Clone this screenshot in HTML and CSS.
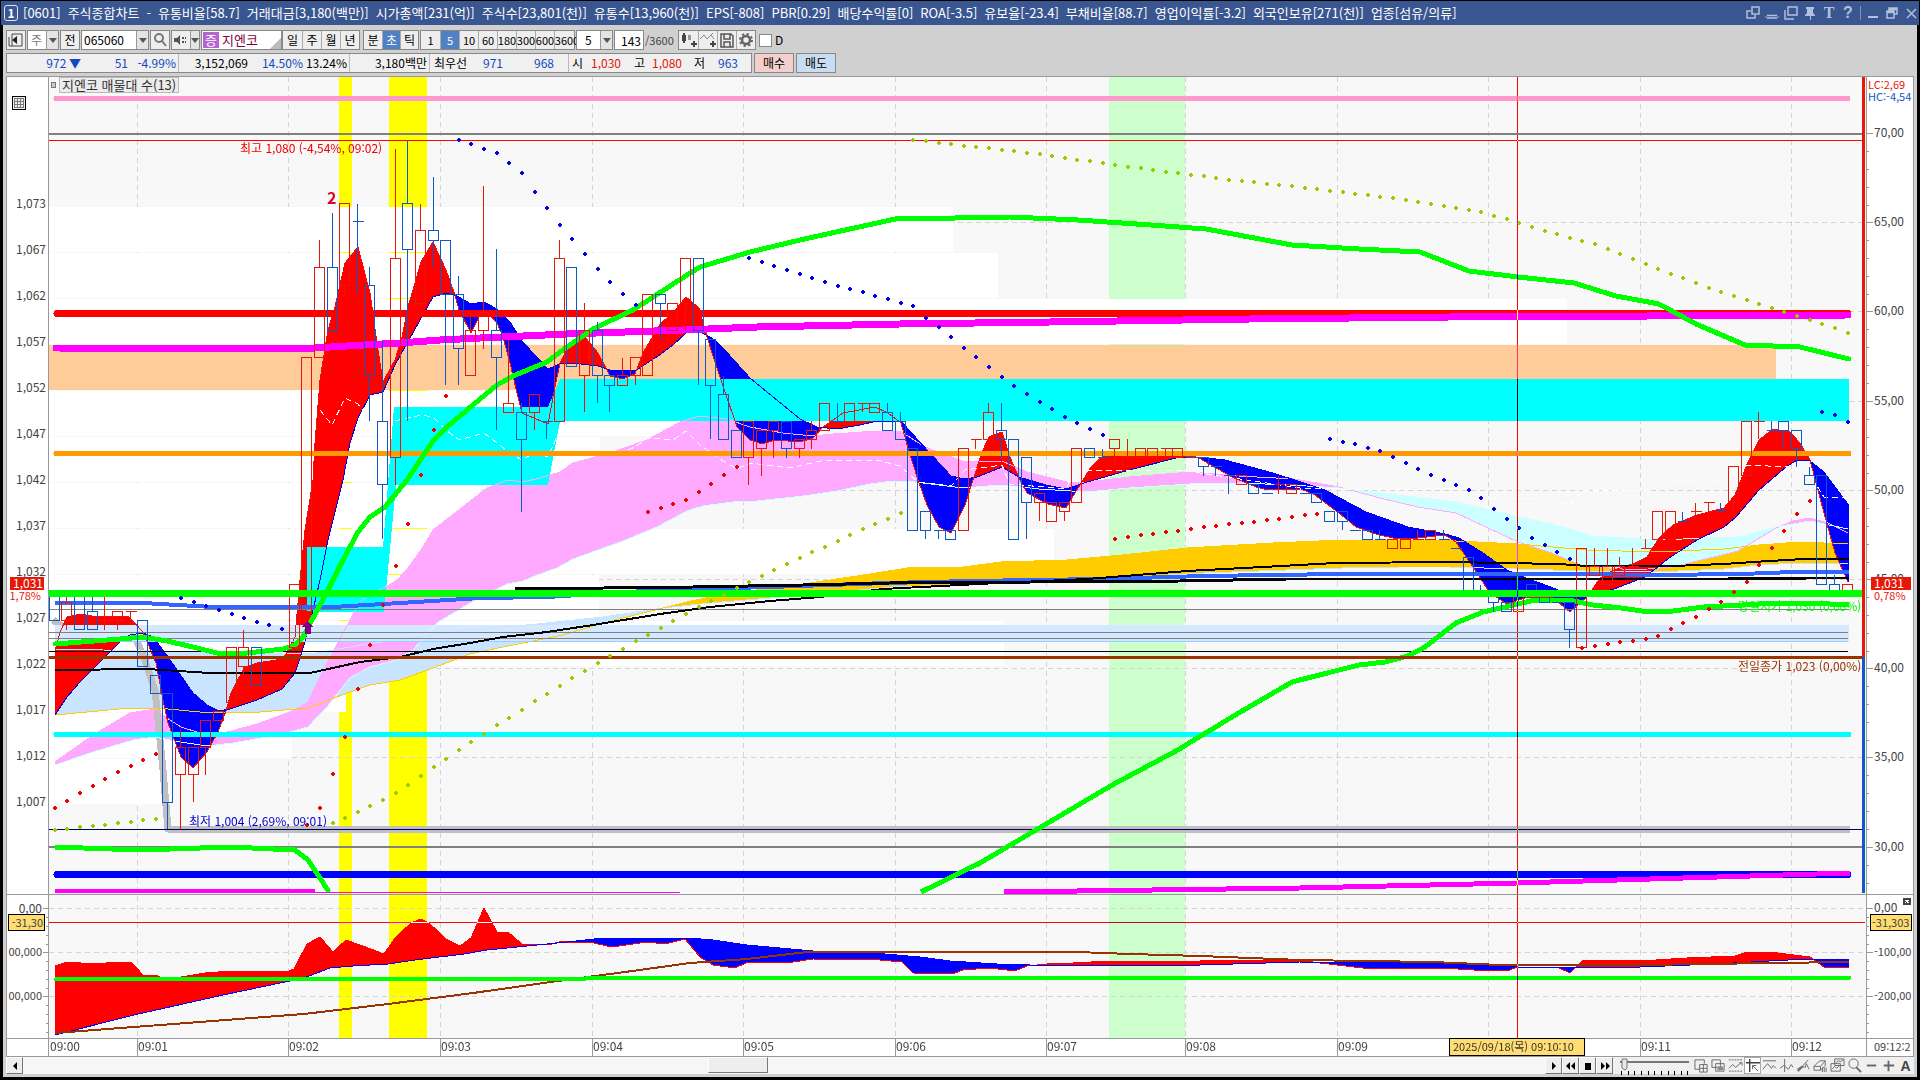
FILE: index.html
```html
<!DOCTYPE html>
<html lang="ko">
<head>
  <meta charset="UTF-8">
  <title>[0601] 주식종합차트</title>
  <link rel="stylesheet" href="styles.css">
</head>
<body>
  <header class="titlebar">
    <span class="win-no">1</span>
    <h1><span>[0601]</span><span>주식종합차트</span><span>-</span><span>유통비율[58.7]</span><span>거래대금[3,180(백만)]</span><span>시가총액[231(억)]</span><span>주식수[23,801(천)]</span><span>유통수[13,960(천)]</span><span>EPS[-808]</span><span>PBR[0.29]</span><span>배당수익률[0]</span><span>ROA[-3.5]</span><span>유보율[-23.4]</span><span>부채비율[88.7]</span><span>영업이익률[-3.2]</span><span>외국인보유[271(천)]</span><span>업종[섬유/의류]</span></h1>
    <div class="win-icons">
      <button aria-label="창 분리"><svg width="14" height="14"><path d="M6 1h7v7H6zM5 5H1v7h8V9"/></svg></button>
      <button aria-label="접기"><svg width="14" height="14"><path d="M2 9.500h10M2 12h10M1 10.500v1M13 10.500v1"/></svg></button>
      <button aria-label="복사"><svg width="14" height="14"><path d="M4 1h9v8H4zM1 4v9h9"/></svg></button>
      <button aria-label="고정"><svg width="14" height="14"><path class="solid" d="M3 1h8v2h-1v4l2 2v1H8v4H7v-4H2V9l2-2V3H3z"/></svg></button>
      <button class="glyph" aria-label="글꼴">T</button>
      <button class="glyph q" aria-label="도움말">?</button>
      <span class="sep"></span>
      <button aria-label="최소화"><svg width="14" height="14"><path class="solid" d="M2 10h10v2H2z"/></svg></button>
      <button aria-label="이전 크기"><svg width="14" height="14"><path d="M4 5V2h8v6H9M2 5h7v7H2zM2 6.500h7M4 3.500h8"/></svg></button>
      <button aria-label="닫기"><svg width="14" height="14"><path d="M3 3l9 9M12 3l-9 9"/></svg></button>
    </div>
  </header>

  <main class="window">
    <div class="toolbar">
      <button class="box" aria-label="화면"><svg width="18" height="18"><path d="M5 3h10v12H5M2 6v9h3M5 3v12" stroke="#444" fill="none"/><path d="M10 5v8L5 9z" fill="#222"/></svg></button>
      <button class="combo w32"><span class="dim">주</span><i></i></button>
      <button class="box">전</button>
      <label class="combo w68"><input type="text" value="065060" aria-label="종목코드"><i></i></label>
      <button class="box" aria-label="찾기"><svg width="18" height="18" fill="none" stroke="#777"><circle cx="8" cy="7" r="4" stroke-width="2"/><path d="M11 10l4 5" stroke-width="2"/></svg></button>
      <button class="combo w28" aria-label="소리"><svg width="18" height="18" fill="#555"><path d="M2 7h3l3-3v10l-3-3H2z"/><path d="M10 6h2v2h-2zM13 6h1v2h-1zM10 10h2v2h-2zM13 10h1v2h-1z"/></svg><i></i></button>
      <span class="stock"><b>증</b>지엔코</span>
      <div class="group"><button>일</button><button>주</button><button>월</button><button>년</button></div>
      <div class="group slim"><button>분</button><button class="on">초</button><button>틱</button></div>
      <div class="group nums"><button>1</button><button class="on">5</button><button>10</button><button>60</button><button>180</button><button>300</button><button>600</button><button>3600</button></div>
      <button class="combo w37"><span class="mid">5</span><i></i></button>
      <label class="count"><input type="text" value="143" aria-label="조회 개수"><span>/3600</span></label>
      <div class="group">
        <button aria-label="봉 추가"><svg width="18" height="18" fill="#444"><path d="M2 4h4v6H2zM3 2h2v10H3z"/><path d="M8 4h3v5H8z" fill="#999"/><path d="M11 12h6v2h-6zM13 10h2v6h-2z"/></svg></button>
        <button aria-label="지표 추가"><svg width="18" height="18" fill="none" stroke="#888"><path d="M1 8l4-4 3 4 4-4 3 4M8 8l6-6"/><path d="M11 13h6M14 10v6" stroke="#444" stroke-width="2"/></svg></button>
        <button aria-label="저장"><svg width="18" height="18" fill="none" stroke="#555" stroke-width="1.500"><path d="M3 3h10l2 2v11H3zM6 3v5h6V3M6 16v-5h6v5"/></svg></button>
        <button aria-label="설정"><svg width="18" height="18" fill="none" stroke="#666"><circle cx="9" cy="9" r="4" stroke-width="2.500"/><circle cx="9" cy="9" r="6" stroke-width="2" stroke-dasharray="2.300 2.400"/></svg></button>
      </div>
      <label class="check"><input type="checkbox">D</label>
    </div>

    <div class="quote">
      <div class="cells">
        <div class="cell c1"><span class="blue price">972 ▼</span><span class="blue">51</span><span class="blue">-4.99%</span></div>
        <div class="cell c2"><span>3,152,069</span><span class="blue">14.50%</span><span>13.24%</span></div>
        <div class="cell c3"><span>3,180백만</span></div>
        <div class="cell c4"><span>최우선</span><span class="blue">971</span><span class="blue">968</span></div>
        <div class="cell c5"><span>시</span><span class="red">1,030</span><span>고</span><span class="red">1,080</span><span>저</span><span class="blue">963</span></div>
      </div>
      <button class="buy">매수</button>
      <button class="sell">매도</button>
    </div>

    <section class="chart">
      <svg class="axis-left" viewBox="7 77 42 979" preserveAspectRatio="none"></svg>
      <svg class="plot" viewBox="49 77 1817 979" preserveAspectRatio="none"></svg>
      <svg class="axis-right" viewBox="1866 77 47 979" preserveAspectRatio="none"></svg>
      <div class="legend"><i></i><span>지엔코 매물대 수(13)</span></div>
    </section>

    <footer class="bottom">
      <button class="scroll-btn" aria-label="왼쪽"><svg width="14" height="14"><path d="M9 3v8L5 7z"/></svg></button>
      <div class="track"><div class="thumb"></div></div>
      <button class="play" aria-label="재생"><svg width="14" height="14"><path d="M5 3v8l4-4z"/></svg></button>
      <button class="play" aria-label="뒤로"><svg width="14" height="14"><path d="M6 3v8L2 7zM11 3v8L7 7z"/></svg></button>
      <button class="play" aria-label="정지"><svg width="14" height="14"><path d="M4 4h6v7H4z"/></svg></button>
      <button class="play" aria-label="앞으로"><svg width="14" height="14"><path d="M3 3v8l4-4zM8 3v8l4-4z"/></svg></button>
      <svg class="slider" width="72" height="18" role="img" aria-label="속도"><path d="M2 5h69" stroke="#777" stroke-width="2"/><path d="M4 2h5v9l-2 2-3-2z" fill="#e8e8e8" stroke="#777"/><path d="M3.500 14v4M10.500 14v4M16.500 14v4M23.500 14v4M30.500 14v4M36.500 14v4M43.500 14v4M50.500 14v4M56.500 14v4M63.500 14v4M69.500 14v4" stroke="#000"/></svg>
      <div class="tools">
        <button aria-label="창 추가"><svg viewBox="0 0 16 16"><path d="M1 2h10v4M1 2v10h5M6 7h8v8H6zM10 7v8M6 11h8"/></svg></button>
        <button aria-label="창 겹침"><svg viewBox="0 0 16 16"><path d="M1 2h9v8H1zM5 6h9v8H5z" fill="#f0f0f0"/><path d="M7 9h6v4H7z" fill="#888" stroke="none"/></svg></button>
        <button aria-label="영역"><svg viewBox="0 0 16 16"><path d="M1 2h14M1 14h14" stroke-dasharray="2 1"/><path d="M1 11l4-4 3 3 6-5M12 5h3v3"/></svg></button>
        <button class="pressed" aria-label="십자선"><svg viewBox="0 0 16 16"><path d="M1 5h15M5 1v14" stroke="#444" stroke-width="1.500"/><path d="M8 8l6 6M8 8h4M8 8v4"/></svg></button>
        <button aria-label="수평선"><svg viewBox="0 0 16 16"><path d="M1 3h14M1 12l5-6 4 5 2-3 3 3"/></svg></button>
        <button aria-label="수직선"><svg viewBox="0 0 16 16"><path d="M6 1v14M1 11l4-3 5 4 3-5 2 3"/></svg></button>
        <button aria-label="추세선"><svg viewBox="0 0 16 16"><path d="M2 14L13 2M1 12l5-3 4 1 1-4 3 6"/><path d="M2 14l5-5" stroke-width="2"/></svg></button>
        <button aria-label="지우개"><svg viewBox="0 0 16 16"><path d="M1 9l6-6h6l-5 6zM1 9v4h7V9M8 13l5-5V3M10 10v5M12 10v5M14 10v5"/></svg></button>
        <button aria-label="차트 겹침"><svg viewBox="0 0 16 16"><path d="M5 1h10v7H5zM1 6h10v8H1z" fill="#f0f0f0"/><path d="M2 12l3-3 2 2 3-3M6 5l3-2 2 1 3-2"/></svg></button>
        <button aria-label="돋보기"><svg viewBox="0 0 16 16"><circle cx="7" cy="6" r="5"/><path d="M10 10l5 5" stroke-width="2"/></svg></button>
        <button aria-label="축소"><svg viewBox="0 0 16 16"><path d="M3 8h10" stroke-width="2"/></svg></button>
        <button aria-label="확대"><svg viewBox="0 0 16 16"><path d="M3 8h11M8 3v11" stroke-width="2"/></svg></button>
        <button class="letter" aria-label="자동">A</button>
      </div>
    </footer>
  </main>

  <script src="chart.js"></script>
</body>
</html>
```
FILE: styles.css
```css
* {
  box-sizing: border-box;
}

body {
  margin: 0;
  height: 100vh;
  padding: 1px 0 3px;
  display: flex;
  flex-direction: column;
  overflow: hidden;
  background: #000;
  color: #000;
  font-family: "Noto Sans CJK KR", sans-serif;
  font-size: 12px;
  line-height: 16px;
}

button, input {
  font: inherit;
  color: inherit;
  margin: 0;
  padding: 0;
  border: 0;
  background: none;
}

button {
  display: flex;
  align-items: center;
  justify-content: center;
  white-space: nowrap;
}

/* title bar */
.titlebar {
  flex: none;
  height: 24px;
  margin: 0 1px;
  padding: 0 1px 0 3px;
  display: flex;
  align-items: center;
  gap: 5px;
  background: #3a5690;
  color: #fff;
}

.win-no {
  width: 14px;
  height: 16px;
  line-height: 14px;
  border: 1px solid #dde4f4;
  border-radius: 3px;
  text-align: center;
  font-weight: bold;
}

.titlebar h1 {
  flex: 1;
  display: flex;
  gap: 7px;
  margin: 0;
  font-size: 13px;
  line-height: 20px;
  font-weight: normal;
  white-space: nowrap;
}

.win-icons {
  display: flex;
  align-items: center;
  gap: 5px;
  color: #b3c0de;
}

.win-icons svg {
  fill: none;
  stroke: #b3c0de;
  stroke-width: 1.5px;
}

.win-icons .solid {
  fill: #b3c0de;
  stroke: none;
}

.glyph {
  width: 14px;
  font-family: "Liberation Serif", serif;
  font-size: 16px;
  font-weight: bold;
}

.q {
  font-family: "Liberation Sans", sans-serif;
}

.sep {
  width: 1px;
  height: 14px;
  background: #8392b8;
}

/* window body */
.window {
  flex: 1;
  min-height: 0;
  margin: 0 3px;
  padding: 0 3px 3px;
  display: flex;
  flex-direction: column;
  background: #d0d0d0;
}

.toolbar {
  flex: none;
  height: 28px;
  padding-top: 5px;
  display: flex;
  align-items: flex-start;
  gap: 1px;
  line-height: 18px;
}

.box, .combo, .stock, .group, .count {
  height: 20px;
  border: 1px solid #888;
  background: #eee;
}

.box {
  width: 20px;
}

.combo {
  display: flex;
  align-items: center;
  justify-content: flex-start;
  background: #fff;
}

.combo i {
  width: 12px;
  height: 18px;
  margin-left: auto;
  flex: none;
  background: #e4e4e4;
  border-left: 1px solid #999;
}

.combo i::after {
  content: "";
  display: block;
  margin: 7px auto 0;
  width: 0;
  border: 4px solid transparent;
  border-top: 5px solid #555;
  border-bottom: 0;
}

.combo input {
  width: 52px;
  height: 18px;
  padding-left: 2px;
}

.w28 { width: 29px; background: #eee; }
.w28 i { width: 9px; }
.w32 { width: 32px; }
.w37 { width: 37px; }
.w68 { width: 68px; }

.dim {
  color: #777;
  padding-left: 3px;
}

.mid {
  padding-left: 8px;
}

.stock {
  width: 81px;
  display: flex;
  align-items: center;
  gap: 3px;
  margin-right: -1px;
  font-size: 13px;
  color: #800040;
  background: linear-gradient(135deg, #fff 88%, #bbb 89%);
}

.stock b {
  width: 16px;
  line-height: 16px;
  margin-left: 1px;
  text-align: center;
  background: #b565d0;
  color: #fff;
  font-weight: normal;
}

.group {
  display: flex;
  margin: 0 2px 0 0;
}

.group button {
  width: 19px;
  height: 18px;
}

.group button + button {
  border-left: 1px solid #aaa;
}

.slim {
  margin: 0;
}

.slim button {
  width: 18px;
}

.nums {
  margin: 0;
  font-size: 11px;
}

.nums button:last-child {
  width: 25px;
  margin-right: -5px;
}

.group .on {
  background: #4f81c4;
  color: #fff;
}

.count {
  display: flex;
  border: 0;
  background: none;
  margin-right: 2px;
}

.count input {
  width: 30px;
  height: 20px;
  padding-left: 6px;
  border: 1px solid #888;
  background: #fff;
}

.count span {
  line-height: 20px;
  width: 31px;
  padding-left: 1px;
  font-size: 11px;
  color: #444;
}

.check {
  display: flex;
  align-items: center;
  height: 20px;
  gap: 3px;
}

.check input {
  appearance: none;
  width: 13px;
  height: 13px;
  border: 1px solid #888;
  background: #fff;
}

/* quote line */
.quote {
  flex: none;
  height: 23px;
  display: flex;
  gap: 2px;
  line-height: 18px;
}

.cells {
  height: 20px;
  display: flex;
  border: 1px solid #888;
  background: #f0f0f0;
  white-space: nowrap;
}

.cell {
  display: grid;
  padding-right: 2px;
  text-align: right;
}

.cell + .cell {
  border-left: 1px solid #bbb;
}

.c1 { grid-template-columns: 74px 47px 48px; }
.c2 { grid-template-columns: 69px 55px 44px; }
.c3 { grid-template-columns: 77px; }
.c4 { grid-template-columns: 37px 36px 51px 12px; }
.c5 { grid-template-columns: 14px 38px 24px 37px 23px 33px 11px; }

.blue { color: #1448c0; }
.red { color: #e01808; }

.quote button {
  width: 40px;
  height: 20px;
  border: 1px solid #888;
}

.buy { background: #f4d0cc; }
.sell { background: #c8dcf2; }

/* chart */
.chart {
  flex: 1;
  min-height: 0;
  position: relative;
  display: grid;
  grid-template-columns: 42px 1fr 47px;
  border: 1px solid #999;
  background: #fff;
}

.chart svg {
  display: block;
  width: 100%;
  height: 100%;
  shape-rendering: crispEdges;
}

.chart text {
  font-size: 12px;
  fill: #444;
}

.chart .small {
  font-size: 11px;
}

.chart .signal {
  font-size: 16px;
  font-weight: bold;
}

.chart .cross {
  stroke: #0ff;
  mix-blend-mode: difference;
}

.plot {
  isolation: isolate;
}

.legend {
  position: absolute;
  left: 44px;
  top: 0;
  display: flex;
  align-items: center;
  gap: 3px;
  line-height: 14px;
  font-size: 13px;
  color: #333;
}

.legend i {
  width: 5px;
  height: 6px;
  border: 1px solid #777;
  background: #ccc;
}

.legend span {
  border: 1px solid #bbb;
  background: #ececec;
  padding: 0 2px;
}

/* bottom bar */
.bottom {
  flex: none;
  height: 17px;
  display: flex;
  align-items: stretch;
  background: #f0f0f0;
}

.scroll-btn, .play {
  width: 17px;
  background: #eee;
  border: 1px solid #fff;
  border-right-color: #777;
  border-bottom-color: #777;
}

.track {
  flex: 1;
  background: #f6f6f6;
}

.thumb {
  margin-left: 45%;
  width: 60px;
  height: 16px;
  background: #eee;
  border: 1px solid #fff;
  border-right-color: #777;
  border-bottom-color: #777;
}

.slider {
  margin: 0 3px 0 5px;
}

.tools {
  display: flex;
}

.tools button {
  width: 17px;
}

.tools svg {
  width: 15px;
  height: 15px;
  fill: none;
  stroke: #666;
}

.tools .pressed {
  background: #fff;
  border: 1px solid #aaa;
}

.tools .letter {
  font-family: "Liberation Sans", sans-serif;
  font-weight: bold;
  font-size: 14px;
  color: #444;
}
```
FILE: chart.js
```js
const NS = "http://www.w3.org/2000/svg";
const plot = document.querySelector(".plot");
const left = document.querySelector(".axis-left");
const right = document.querySelector(".axis-right");

function add(parent, tag, attrs, text) {
  const el = document.createElementNS(NS, tag);
  for (const k in attrs) el.setAttribute(k, attrs[k]);
  if (text !== undefined) el.textContent = text;
  parent.appendChild(el);
  return el;
}

const rect = (p, x, y, w, h, fill, stroke) =>
  add(p, "rect", { x, y, width: w, height: h, fill, stroke: stroke || "none" });
const line = (p, x1, y1, x2, y2, stroke, w, extra) =>
  add(p, "line", Object.assign({ x1, y1, x2, y2, stroke, "stroke-width": w || 1 }, extra));
const text = (p, x, y, s, fill, anchor, cls) =>
  add(p, "text", { x, y, style: "fill:" + (fill || "#444"), "text-anchor": anchor || "start", class: cls || "label" }, s);

const parse = s => s.trim().split(/\s+/).map(p => p.split(",").map(Number));
const curve = (s, stroke, w, extra) =>
  add(plot, "polyline", Object.assign({ points: s, fill: "none", stroke, "stroke-width": w, "stroke-linejoin": "round" }, extra));

function yAt(pts, x) {
  if (x <= pts[0][0]) return pts[0][1];
  for (let i = 1; i < pts.length; i++) {
    if (x <= pts[i][0]) {
      const [x0, y0] = pts[i - 1], [x1, y1] = pts[i];
      return y0 + (y1 - y0) * (x - x0) / (x1 - x0 || 1);
    }
  }
  return pts[pts.length - 1][1];
}

// fills between two lines, one colour where a is above b, the other below
function ribbon(a, b, up, down) {
  const pa = parse(a), pb = parse(b);
  const top = [], base = [], low = [];
  for (let x = 55; x <= 1849; x++) {
    const ya = yAt(pa, x), yb = yAt(pb, x);
    top.push(x + "," + Math.min(ya, yb));
    low.push(x + "," + Math.max(ya, yb));
    base.unshift(x + "," + yb);
  }
  add(plot, "polygon", { points: top.concat(base).join(" "), fill: up });
  add(plot, "polygon", { points: low.concat(base).join(" "), fill: down });
}

const barX = i => 55.3 + i * 12.625;
const priceY = p => 829.3 - (p - 1004) * 9.066;

function dots(s, fill) {
  const pts = parse(s);
  const x0 = pts[0][0] - 4, x1 = pts[pts.length - 1][0] + 4;
  for (let i = 0; i < 143; i++) {
    const x = Math.floor(barX(i));
    if (x < x0 || x > x1) continue;
    const y = Math.round(yAt(pts, x));
    rect(plot, x - 2, y - 1, 4, 2, fill);
    rect(plot, x - 1, y - 2, 2, 4, fill);
  }
}

const hours = [[137, "09:01"], [288, "09:02"], [440, "09:03"], [592, "09:04"], [743, "09:05"], [895, "09:06"], [1046, "09:07"], [1185, "09:08"], [1337, "09:09"], [1488, ""], [1640, "09:11"], [1791, "09:12"]];
const dash = { "stroke-dasharray": "5 4" };

// background, columns, grid
rect(plot, 49, 77, 1817, 961, "#f8f8f8");
rect(plot, 1109, 77, 76, 961, "#ccffcc");
rect(plot, 339, 77, 13, 961, "#ffff00");
rect(plot, 389, 77, 38, 961, "#ffff00");
for (const [x] of hours) line(plot, x + .5, 77, x + .5, 1038, "#d4d4d4", 1, dash);
for (let i = 0; i < 9; i++) {
  const y = Math.round(133 + i * 89.2) + .5;
  line(plot, 49, y, 1862, y, "#d4d4d4", 1, dash);
}
for (const y of [908.5, 952.5, 996.5]) line(plot, 49, y, 1865, y, "#d4d4d4", 1, dash);

// volume profile
[953, 998, 1567, 1776, 740, 600, 480, 1054, 599, 1004, 346, 292, 170].forEach((x, i) =>
  rect(plot, 49, 207 + i * 46, x - 49, 45, i === 3 ? "#ffcc99" : "#fff"));

const fast = "55,651 60,632 67,617 80,614 92,616 128,616 143,632 156,663 163,700 168,723 181,757 193,768 207,752 218,732 226,711 231,693 244,668 257,663 283,659 287,652 295,637 300,580 305,530 313,480 315,443 320,380 328,330 335,307 345,263 358,247 370,293 377,343 383,382 395,360 402,337 408,307 421,262 433,242 446,270 455,295 459,310 471,333 480,315 488,313 497,323 503,337 510,363 517,393 522,413 548,424 555,387 560,363 568,347 585,337 598,353 610,376 623,379 635,374 643,353 661,323 673,313 686,297 699,308 705,330 712,353 722,383 737,427 750,440 762,444 775,440 800,442 813,438 823,427 843,413 875,407 888,413 901,423 908,448 918,480 927,505 939,527 951,533 965,505 974,477 982,452 989,437 1002,432 1010,457 1019,478 1027,493 1048,504 1066,508 1078,488 1091,467 1104,455 1115,452 1129,453 1180,452 1199,458 1218,469 1232,477 1256,487 1268,490 1301,489 1315,495 1339,513 1356,527 1376,534 1397,539 1418,538 1445,535 1456,542 1473,567 1490,593 1507,604 1525,598 1552,597 1570,612 1587,597 1600,578 1614,570 1635,563 1647,557 1659,538 1673,525 1697,515 1724,508 1735,495 1748,462 1759,440 1773,429 1790,432 1800,443 1810,460 1824,513 1835,553 1848,582";
const slow = "55,715 67,697 80,682 105,657 120,642 130,635 143,633 153,637 168,657 193,693 207,705 219,711 230,709 257,700 282,689 295,673 302,652 310,623 320,580 328,540 343,480 350,443 358,418 370,395 383,392 395,365 410,338 433,297 446,293 457,296 471,304 484,302 497,309 510,322 522,341 533,353 548,369 560,364 573,363 598,366 610,370 635,371 661,354 673,345 686,333 698,331 712,338 723,348 750,378 800,419 817,427 837,429 860,425 877,421 901,421 918,440 951,476 965,479 977,477 1002,467 1019,477 1046,485 1066,489 1084,483 1129,470 1180,457 1199,457 1225,460 1273,473 1304,483 1325,490 1366,512 1408,527 1445,534 1459,538 1483,553 1507,570 1518,575 1556,589 1570,597 1587,596 1614,589 1645,577 1669,558 1697,540 1724,527 1736,517 1759,490 1786,467 1797,460 1810,461 1824,472 1835,487 1848,504";
const bandTop = "55,762 93,735 130,713 155,709 170,720 181,727 200,733 220,734 257,724 295,710 308,702 320,677 333,652 358,605 367,596 387,586 397,580 408,568 423,547 433,530 487,488 508,480 523,482 540,478 560,472 573,463 610,453 647,440 680,422 699,416 727,419 750,427 783,433 813,436 833,434 877,431 900,431 925,447 965,462 1002,461 1027,472 1067,482 1087,482 1129,477 1190,472 1239,476 1294,479 1339,487 1380,498 1418,507 1456,513 1518,542 1552,553 1583,566 1635,570 1673,567 1738,551 1776,528 1793,521 1810,518 1828,523 1848,533";
const bandLow = "55,765 93,752 133,740 155,737 180,742 207,746 233,743 283,734 308,727 327,707 350,678 370,667 397,660 413,650 437,623 470,603 497,589 507,584 523,581 537,575 557,568 573,559 623,541 657,527 687,511 703,506 733,502 757,501 803,496 837,491 870,484 893,481 915,482 963,488 1001,485 1039,489 1087,492 1129,488 1190,484 1239,483 1290,485 1339,488 1380,493 1456,502 1518,517 1552,524 1593,536 1655,540 1738,537 1776,527 1810,521 1848,529";
const gold = "55,715 130,708 157,708 200,712 260,712 308,708 350,692 370,685 400,680 433,668 470,654 503,647 563,635 593,626 623,618 663,608 687,602 710,597 763,589 803,584 870,574 907,568 963,567 1001,562 1067,560 1122,555 1187,548 1273,543 1342,540 1400,540 1456,541 1518,544 1587,550 1655,552 1724,549 1759,545 1800,542 1848,544";
const sky = "55,649 200,652 310,654 367,644 470,630 537,624 603,617 663,608 710,603 770,598 803,595 893,587 1032,582 1135,577 1204,573 1342,568 1400,567 1449,567 1518,569 1587,571 1655,572 1724,569 1759,565 1800,563 1848,564";

ribbon(gold, sky, "#ffcc00", "#c8e4ff");
ribbon(bandTop, bandLow, "#ffaaff", "#ccffff");
curve("53,620 67,630 132,630 145,660 155,690 163,770 168,829 1850,829", "#c0c0c0", 7);
ribbon(fast, slow, "#ff0000", "#0000ff");
add(plot, "polygon", { points: "307,547 383,547 394,407 548,407 560,379 1849,379 1849,421 560,421 548,485 396,485 384,612 307,612", fill: "#00ffff" });
rect(plot, 55, 625, 1794, 17, "#d4e9ff");

curve(bandTop, "#ffaaff", 1);
curve(bandLow, "#ccffff", 1);
curve(sky, "#c8e4ff", 1);
curve(gold, "#ffcc00", 1);
curve(slow, "#0000e0", 1);
curve(fast, "#ee1010", 1);
for (const s of ["320,410 332,425 345,398 358,404 370,420", "395,421 421,415 433,417 446,430 459,440 484,433 510,453 522,460 535,452 548,457 560,430", "598,451 623,452 635,447 648,438 673,440 686,431 700,445 723,461 737,469 750,463 790,468 825,460 877,460 900,466 918,482 951,486 965,470 1002,465 1010,484 1066,489 1075,470 1180,470 1300,488 1390,490 1450,488 1460,498 1540,499 1570,505 1583,490 1645,491 1660,482 1724,481 1745,465 1790,467 1810,475 1824,497 1848,498"])
  curve(s, "#fff", 1, { "stroke-dasharray": "6 4" });

// horizontal levels
const cap = { "stroke-linecap": "round" };
line(plot, 49, 134, 1862, 134, "#808080", 2);
line(plot, 49, 140.5, 1862, 140.5, "#ff0000", 1);
line(plot, 56, 98.5, 1848, 98.5, "#ff99cc", 5, cap);
line(plot, 57, 313.5, 1848, 313.5, "#ff0000", 7, cap);
line(plot, 56, 453.5, 1849, 453.5, "#ff9900", 5, cap);
line(plot, 56, 734.5, 1849, 734.5, "#00ffff", 5, cap);
line(plot, 57, 874.5, 1848, 874.5, "#0000ff", 7, cap);
line(plot, 49, 609.5, 1849, 609.5, "#808080", 1);
line(plot, 49, 632.5, 1848, 632.5, "#808080", 1);
line(plot, 49, 638.5, 1848, 638.5, "#808080", 1);
line(plot, 55, 641.5, 1848, 641.5, "#99ccff", 1);
line(plot, 49, 651.5, 1848, 651.5, "#000", 1);
line(plot, 49, 829.5, 1862, 829.5, "#000066", 1);
line(plot, 49, 847, 1862, 847, "#808080", 2);

// long averages
curve("55,603 143,603 213,607 333,607 400,603 480,598 547,597 660,590 770,587 887,583 970,581 1101,579 1204,576 1342,574 1569,574 1655,575 1742,574 1793,572 1849,572", "#3366ff", 4);
curve("515,589 693,587 803,585 890,583 1032,582 1180,581 1287,579 1728,579 1807,578 1849,578", "#000", 3);
curve("55,670 147,669 210,673 310,673 360,662 400,657 433,649 470,643 503,637 547,632 593,625 660,614 710,607 770,601 820,597 883,589 998,583 1087,579 1187,571 1263,567 1335,563 1449,562 1559,564 1587,566 1673,566 1724,564 1769,561 1804,559 1849,559", "#000", 2);
curve("56,348 300,349 330,347 400,343 440,340 480,338 567,334 683,330 757,327 900,324 1050,322 1250,319 1450,317 1848,315", "#ff00ff", 7, cap);
curve("55,644 120,639 143,637 167,641 193,647 217,653 247,653 283,649 295,645 303,637 313,618 328,590 342,562 358,532 370,517 385,507 407,480 433,441 447,427 467,410 497,385 513,376 547,362 567,347 593,329 633,310 687,275 700,267 720,261 750,252 800,240 877,223 900,218 955,218 1010,217 1078,220 1151,225 1206,229 1292,245 1359,249 1420,252 1469,271 1518,277 1574,283 1616,296 1659,304 1696,324 1745,345 1800,347 1849,359", "#00ff00", 5, cap);
curve("55,847 140,850 230,847 295,850 308,860 318,875 329,892", "#00ff00", 5);
curve("921,892 980,863 1041,827 1114,784 1176,751 1237,714 1292,682 1339,670 1359,665 1385,662 1408,656 1425,647 1456,623 1483,612 1518,604 1535,600 1569,600 1593,605 1621,608 1649,612 1673,611 1704,607 1742,605 1776,603 1810,603 1849,605", "#00ff00", 5);
curve("55,891 315,891", "#ff00ff", 4);
curve("315,892 680,892", "#ff00ff", 1);
curve("1004,892 1300,888 1517,883 1850,873", "#ff00ff", 5);

// candles: colour, body top, body bottom, high, low
const candles = `b,1030,1027 r,1029,1027,1030,1026 b,1030,1026 b,1028,1026,1030 r,1027,1027,1030,1026 r,1028,1027,1028,1026 r,1028,1028,1028,1027 b,1027,1022 b,1021,1019 b,1019,1007,1019,1004
r,1013,1010,1015,1004 r,1013,1010,1013,1007 r,1016,1013,1016,1010 r,1017,1016 r,1024,1018 r,1024,1022,1026,1021 b,1024,1020 - - r,1031,1024
r,1056,1028 r,1066,1056,1069 b,1066,1059,1072 r,1073,1064,1073,1063 b,1071,1071,1073,1063 b,1064,1054,1066,1049 b,1049,1042,1058,1036 r,1067,1045,1079,1042 b,1073,1068,1080,1049 r,1070,1062,1073
b,1070,1069,1076,1066 b,1069,1063,1069,1053 b,1063,1057,1065,1053 r,1059,1054,1061 r,1061,1059,1075,1057 b,1059,1056,1068,1048 r,1051,1050,1058 b,1050,1047,1051,1039 r,1052,1050,1052,1048 b,1049,1049,1049,1047
r,1067,1049,1069 b,1066,1055 r,1059,1054,1062,1050 b,1059,1054,1060,1051 b,1054,1053,1054,1050 r,1054,1053,1056 r,1056,1054,1056,1053 r,1063,1054 b,1063,1062,1063,1058 r,1062,1059
r,1067,1062,1067,1059 b,1067,1059,1067,1053 b,1058,1053,1058,1047 b,1052,1047,1054 b,1048,1045 r,1049,1045,1049,1042 r,1048,1046,1048,1043 r,1049,1048,1049,1045 b,1049,1046,1049,1045 r,1047,1046,1047,1045
r,1048,1047,1049,1046 r,1051,1048 b,1049,1049,1051 r,1051,1049 r,1051,1051,1051,1050 r,1051,1050 b,1050,1048,1051 b,1049,1047,1050 b,1046,1037 b,1039,1037,1039,1036
b,1037,1037,1037,1036 b,1037,1036 r,1046,1037 r,1047,1047,1047,1046 r,1050,1047,1051 b,1048,1047,1051,1045 b,1047,1036 b,1045,1040,1045,1036 r,1041,1040,1041,1038 r,1040,1038
r,1040,1039,1040,1038 r,1046,1040 b,1046,1045 b,1045,1045,1046 r,1047,1046,1047,1044 r,1045,1044,1047 r,1046,1045 r,1046,1045 r,1046,1046,1046,1045 r,1046,1045
b,1045,1045 b,1045,1044,1045,1043 b,1044,1044,1044,1043 b,1043,1043,1043,1041 r,1043,1042 b,1042,1041 b,1041,1041 r,1042,1042,1043,1041 r,1042,1041 b,1041,1041
b,1041,1040 b,1039,1038 b,1039,1038,1039,1037 b,1037,1037 b,1037,1036 b,1036,1036,1037 r,1036,1035 r,1036,1035 r,1036,1036,1037 r,1037,1036
b,1036,1036,1037 b,1035,1035 b,1034,1030 b,1030,1030,1031 b,1030,1029,1030,1028 b,1029,1028 r,1030,1028 b,1031,1030 b,1030,1029 b,1029,1029
b,1029,1026,1029,1024 r,1035,1024 r,1033,1032,1035 r,1033,1031,1035 r,1033,1032,1034 r,1033,1033,1035 r,1035,1035,1036 r,1039,1036 r,1039,1036 b,1038,1038,1039
r,1039,1039,1040,1038 r,1040,1040,1040,1038 b,1039,1039,1040 r,1044,1040,1044,1039 r,1049,1043 r,1049,1049,1050,1047 b,1048,1048,1049 b,1049,1048,1049,1046 b,1048,1046,1048,1044 b,1043,1042,1044
b,1043,1031 b,1031,1030,1032 r,1031,1030`.split(/\s+/);
candles.forEach((c, i) => {
  if (c === "-") return;
  const [k, a, b, hi, lo] = c.split(",");
  const top = +a, bot = +b, color = k === "r" ? "#e81808" : "#0f58c8";
  const x = Math.floor(barX(i)) - .5;
  const yt = Math.floor(priceY(top)) + .5, yb = Math.floor(priceY(bot)) + .5;
  if (yt === yb) line(plot, x - 5, yt, x + 6, yt, color);
  else rect(plot, x - 5, yt, 10, yb - yt, "none", color);
  if (hi && +hi > top) line(plot, x, Math.round(priceY(+hi)), x, yt, color);
  if (lo && +lo < bot) line(plot, x, yb, x, Math.round(priceY(+lo)), color);
});

line(plot, 49, 593.5, 1862, 593.5, "#00ff00", 7);
line(plot, 49, 657.5, 1862, 657.5, "#993300", 3);

// parabolic dots
dots("181,598 193,602 219,610 257,622 282,629", "#0000ee");
dots("459,140 471,144 497,153 509,163 522,173 534,191 560,225 598,269 610,282 635,305", "#0000ee");
dots("749,258 774,266 812,278 850,289 888,299 913,306 926,318 938,326 963,347 1014,386 1040,402 1065,417 1103,435", "#0000ee");
dots("1330,439 1355,444 1381,451 1406,463 1431,475 1469,490 1482,499 1507,519 1532,538 1570,559", "#0000ee");
dots("1823,412 1835,415 1848,422", "#0000ee");
dots("55,808 67,801 105,779 130,766 156,754", "#ee0000");
dots("307,825 320,808 332,777 345,737 358,689 370,645 383,605 395,569 408,524 421,475 433,433 446,396", "#ee0000");
dots("648,512 686,500 699,492 736,467", "#ee0000");
dots("1115,539 1166,532 1216,526 1267,520 1317,514", "#ee0000");
dots("1583,648 1608,644 1646,639 1658,636 1671,629 1696,617 1722,601 1747,582 1759,565 1797,514 1810,501", "#ee0000");
dots("55,830 92,826 118,823 156,819", "#99cc00");
dots("332,823 358,812 395,794 433,768 471,742 499,724 572,678 598,663 635,642 686,614 711,601 749,582 800,558 850,535 901,513", "#99cc00");
dots("912,140 1016,151 1108,164 1224,179 1298,187 1408,200 1482,212 1543,230 1604,247 1665,272 1727,294 1788,313 1849,333", "#99cc00");

add(plot, "path", { d: "M307.500 621l6 6h-3v7h-6v-7h-3z", fill: "#800080" });
text(plot, 327, 204, "2", "#dd0022", "start", "signal");
text(plot, 240, 153, "최고 1,080 (-4,54%, 09:02)", "#ee0000");
text(plot, 189, 826, "최저 1,004 (2,69%, 09:01)", "#0000cc");
text(plot, 1738, 611, "당일시가 1,030 (0,68%)", "#00ff00");
text(plot, 1738, 671, "전일종가 1,023 (0,00%)", "#993300");
rect(plot, 1862, 77, 3, 580, "#e81808");
rect(plot, 1862, 657, 3, 236, "#0f58c8");

// lower panel
rect(plot, 49, 894, 1817, 1, "#999");
const osc = "55,966 67,962 94,964 118,962 131,962 143,975 158,976 168,981 181,977 205,973 232,971 286,972 294,969 307,944 320,937 333,952 346,940 371,949 384,954 395,938 411,923 421,919 429,923 446,939 460,946 471,938 484,908 497,932 509,933 522,944 549,945 562,941 571,943 589,942 612,947 647,942 665,944 685,939 700,957 713,965 735,968 748,962 760,963 773,962 793,962 813,959 880,960 902,962 913,973 952,974 963,970 990,968 1015,971 1027,966 1047,964 1073,963 1110,961 1200,961 1300,960 1320,963 1363,968 1458,969 1490,971 1510,970 1517,967 1557,967 1570,973 1583,960 1640,961 1687,958 1735,956 1747,952 1770,952 1810,957 1824,967 1849,967";
const oscSlow = "55,1035 134,1015 223,995 304,978 330,968 353,966 388,964 415,960 464,954 487,950 527,946 567,942 594,939 688,938 713,940 747,945 813,951 873,953 920,957 950,961 997,964 1030,965 1200,965 1300,962 1430,963 1490,966 1517,967 1640,967 1715,964 1806,959 1849,959";
ribbon(osc, oscSlow, "#ff0000", "#0000ff");
curve(osc, "#ff0000", 1);
curve(oscSlow, "#0000ff", 1);
curve("55,1033 134,1027 304,1014 388,1004 473,993 558,981 625,972 690,963 747,959 807,952 927,952 1077,952 1130,954 1200,956 1300,960 1433,962 1500,965 1640,965 1770,963 1849,962", "#993300", 2);
curve("56,979 585,979 586,978 1849,978", "#00ff00", 4, cap);

// time axis
rect(plot, 49, 1038, 1817, 18, "#fff");
rect(plot, 49, 1038, 1817, 1, "#999");
text(plot, 50, 1051, "09:00");
for (const [x, t] of hours) {
  line(plot, x + .5, 1038, x + .5, 1056, "#999");
  if (t) text(plot, x + 1, 1051, t);
}
line(plot, 49, 922.5, 1865, 922.5, "", 1, { class: "cross" });
line(plot, 1517.5, 77, 1517.5, 1038, "", 1, { class: "cross" });
rect(plot, 1449.5, 1038.5, 135, 17, "#ffdd70", "#000");
text(plot, 1453, 1051, "2025/09/18(목) 09:10:10", "#333", "start", "small");

// left axis
rect(left, 48, 77, 1, 979, "#999");
[1073, 1067, 1062, 1057, 1052, 1047, 1042, 1037, 1032, 1027, 1022, 1017, 1012, 1007].forEach((p, i) =>
  text(left, 46, 208 + i * 46, p.toLocaleString("en"), "", "end"));
rect(left, 12.5, 96.5, 13, 13, "#eee", "#000");
add(left, "path", { d: "M14.500 98.500h9v9h-9zM14.500 101.500h9M14.500 104.500h9M17.500 98.500v9M20.500 98.500v9", fill: "none", stroke: "#777" });
rect(left, 10, 577, 34, 13, "#e81808");
text(left, 43, 588, "1,031", "#fff", "end");
text(left, 41, 600, "1,78%", "#e81808", "end", "small");
rect(left, 7, 894, 42, 1, "#999");
rect(left, 7, 1038, 42, 1, "#999");
text(left, 42, 913, "0,00", "", "end");
text(left, 42, 956, "00,000", "", "end", "small");
text(left, 42, 1000, "00,000", "", "end", "small");
rect(left, 8.5, 914.5, 36, 16, "#ffdd70", "#000");
text(left, 43, 927, "-31,30", "", "end", "small");

// right axis
rect(right, 1866, 77, 1, 979, "#999");
text(right, 1868, 89, "LC:2,69", "#e81808", "start", "small");
text(right, 1868, 101, "HC:-4,54", "#0f58c8", "start", "small");
for (let i = 0; i < 9; i++) {
  const y = Math.round(133 + i * 89.2);
  rect(right, 1867, y, 6, 1, "#999");
  for (let k = 1; k < 5; k++) if (y + k * 18 < 890) rect(right, 1867, y + k * 18, 2, 1, "#999");
  text(right, 1874, y + 4, 70 - i * 5 + ",00");
}
rect(right, 1871, 577, 40, 13, "#e81808");
text(right, 1874, 588, "1,031", "#fff");
text(right, 1874, 600, "0,78%", "#e81808", "start", "small");
rect(right, 1866, 894, 47, 1, "#999");
rect(right, 1866, 1038, 47, 1, "#999");
[["0,00", 908], ["-100,00", 952], ["-200,00", 996]].forEach(([s, y]) => {
  rect(right, 1867, y, 6, 1, "#999");
  rect(left, 43, y, 6, 1, "#999");
  for (let k = 1; k < 5; k++) {
    rect(right, 1867, y + k * 9, 2, 1, "#999");
    rect(left, 46, y + k * 9, 2, 1, "#999");
  }
  text(right, 1874, y + 4, s, "", "start", s.length > 4 ? "small" : "label");
});
rect(right, 1870.5, 914.5, 41, 16, "#ffdd70", "#000");
text(right, 1872, 927, "-31,303", "", "start", "small");
rect(right, 1903, 898, 8, 7, "#444");
add(right, "path", { d: "M1905 900l4 3M1909 900l-4 3", stroke: "#fff" });
text(right, 1874, 1051, "09:12:2", "", "start", "small");
```
